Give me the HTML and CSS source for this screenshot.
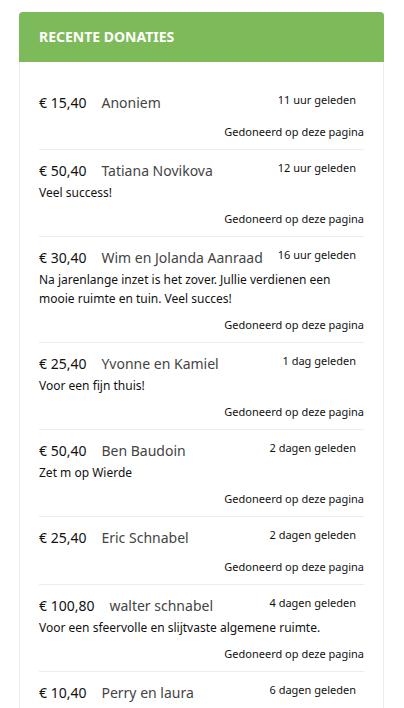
FILE: index.html
```html
<!DOCTYPE html>
<html lang="nl">
<head>
    <meta charset="UTF-8">
    <meta name="viewport" content="width=device-width, initial-scale=1.0">
    <title>Recente donaties</title>
    <link rel="stylesheet" href="styles.css">
</head>
<body>
    <div class="card">
        <div class="card-header">Recente donaties</div>
        <div class="card-body">
            <div class="donation">
                <div class="top"><span class="amount">€ 15,40</span><span class="name">Anoniem</span><span class="time">11 uur geleden</span></div>
                <div class="source">Gedoneerd op deze pagina</div>
            </div>
            <div class="donation">
                <div class="top"><span class="amount">€ 50,40</span><span class="name">Tatiana Novikova</span><span class="time">12 uur geleden</span></div>
                <div class="message">Veel success!</div>
                <div class="source">Gedoneerd op deze pagina</div>
            </div>
            <div class="donation">
                <div class="top"><span class="amount">€ 30,40</span><span class="name">Wim en Jolanda Aanraad</span><span class="time">16 uur geleden</span></div>
                <div class="message">Na jarenlange inzet is het zover. Jullie verdienen een mooie ruimte en tuin. Veel succes!</div>
                <div class="source">Gedoneerd op deze pagina</div>
            </div>
            <div class="donation">
                <div class="top"><span class="amount">€ 25,40</span><span class="name">Yvonne en Kamiel</span><span class="time">1 dag geleden</span></div>
                <div class="message">Voor een fijn thuis!</div>
                <div class="source">Gedoneerd op deze pagina</div>
            </div>
            <div class="donation">
                <div class="top"><span class="amount">€ 50,40</span><span class="name">Ben Baudoin</span><span class="time">2 dagen geleden</span></div>
                <div class="message">Zet m op Wierde</div>
                <div class="source">Gedoneerd op deze pagina</div>
            </div>
            <div class="donation">
                <div class="top"><span class="amount">€ 25,40</span><span class="name">Eric Schnabel</span><span class="time">2 dagen geleden</span></div>
                <div class="source">Gedoneerd op deze pagina</div>
            </div>
            <div class="donation">
                <div class="top"><span class="amount">€ 100,80</span><span class="name">walter schnabel</span><span class="time">4 dagen geleden</span></div>
                <div class="message">Voor een sfeervolle en slijtvaste algemene ruimte.</div>
                <div class="source">Gedoneerd op deze pagina</div>
            </div>
            <div class="donation">
                <div class="top"><span class="amount">€ 10,40</span><span class="name">Perry en laura</span><span class="time">6 dagen geleden</span></div>
                <div class="source">Gedoneerd op deze pagina</div>
            </div>
        </div>
    </div>
</body>
</html>
```

FILE: styles.css
```css
body { margin: 0; padding: 12px 20px 0 19px; background-color: #fff; color: #111; font-family: "Noto Sans", "Open Sans", sans-serif; }
.card { width: 365px; border: 1px solid #ececec; border-top: none; border-radius: 4px 4px 0 0; box-sizing: border-box; }
.card-header { height: 50px; line-height: 50px; padding: 0 20px; margin: 0 -1px; background-color: #7dba5a; color: #fff; font-weight: bold; font-size: 14px; text-transform: uppercase; border-radius: 4px 4px 0 0; }
.card-body { padding: 20px 19px 0 19px; }
.donation { padding: 9px 0 8px; border-bottom: 1px solid #ececec; }
.top { display: flex; align-items: center; height: 24px; line-height: 24px; }
.amount { font-size: 14px; margin-right: 15px; flex-shrink: 0; }
.name { font-size: 14px; color: #444; flex: 1; white-space: nowrap; }
.time { font-size: 11px; line-height: 18px; padding-right: 8px; align-self: flex-start; }
.message { font-size: 12px; line-height: 19px; }
.source { font-size: 11px; line-height: 18px; margin-top: 8px; text-align: right; }
```
